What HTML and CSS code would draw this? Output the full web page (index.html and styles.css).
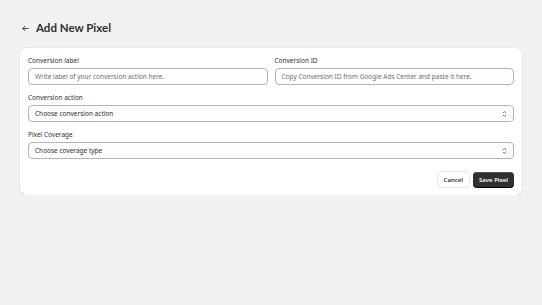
FILE: index.html
```html
<!DOCTYPE html>
<html lang="en">
<head>
	<meta charset="UTF-8">
	<title>Add New Pixel</title>
	<link rel="stylesheet" href="styles.css">
</head>
<body>
	<div class="page">
		<div class="page-header">
			<a href="javascript:;" class="back">
				<svg width="9" height="9" viewBox="0 0 20 20"><path d="M16 10H4.5M9 5l-5 5 5 5" fill="none" stroke="#303030" stroke-width="2" stroke-linecap="round" stroke-linejoin="round"/></svg>
			</a>
			<h1 class="title">Add New Pixel</h1>
		</div>
		<div class="card">
			<div class="row">
				<div class="field">
					<label class="label">Conversion label</label>
					<input type="text" class="input" placeholder="Write label of your conversion action here.">
				</div>
				<div class="field">
					<label class="label">Conversion ID</label>
					<input type="text" class="input" placeholder="Copy Conversion ID from Google Ads Center and paste it here.">
				</div>
			</div>
			<div class="field">
				<label class="label">Conversion action</label>
				<div class="select">
					<span>Choose conversion action</span>
					<svg width="9" height="10" viewBox="0 0 20 20"><path d="M7 7.5l3-3 3 3M7 12.5l3 3 3-3" fill="none" stroke="#4a4a4a" stroke-width="1.6" stroke-linecap="round" stroke-linejoin="round"/></svg>
				</div>
			</div>
			<div class="field">
				<label class="label">Pixel Coverage</label>
				<div class="select">
					<span>Choose coverage type</span>
					<svg width="9" height="10" viewBox="0 0 20 20"><path d="M7 7.5l3-3 3 3M7 12.5l3 3 3-3" fill="none" stroke="#4a4a4a" stroke-width="1.6" stroke-linecap="round" stroke-linejoin="round"/></svg>
				</div>
			</div>
			<div class="actions">
				<button class="btn">Cancel</button>
				<button class="btn btn-primary">Save Pixel</button>
			</div>
		</div>
	</div>
</body>
</html>
```
FILE: styles.css
```css
* { padding: 0; margin: 0; box-sizing: border-box; }
body { background: #f1f1f1; font-family: "Noto Sans", "Open Sans", sans-serif; color: #303030; }
.page { padding: 18px 20px 0; }
.page-header { display: flex; align-items: center; gap: 6px; height: 20px; margin-bottom: 10px; padding-left: 1px; }
.back { display: flex; align-items: center; }
.title { font-family: Lato, "Noto Sans", sans-serif; font-size: 11.5px; font-weight: 700; line-height: 20px; }
.card { background: #fff; border-radius: 7px; padding: 8px; box-shadow: 0 1px 0 rgba(0,0,0,.08), 0 0 0 1px rgba(0,0,0,.03); display: flex; flex-direction: column; gap: 8px; }
.row { display: grid; grid-template-columns: 1fr 1fr; gap: 7px; }
.field { display: flex; flex-direction: column; gap: 2px; }
.label { font-size: 6.5px; line-height: 10px; color: #303030; }
.input, .select { height: 17px; border: 1px solid #b5b5b5; border-radius: 4px; background: #fdfdfd; font-family: inherit; font-size: 6.5px; padding: 0 6px; color: #303030; }
.input::placeholder { color: #6f6f6f; }
.select { display: flex; align-items: center; justify-content: space-between; padding-right: 4px; }
.actions { display: flex; justify-content: flex-end; gap: 4px; margin-top: 5px; }
.btn { height: 15px; border-radius: 4px; border: none; font-family: inherit; font-size: 6px; font-weight: 600; padding: 0 6px; background: #fff; color: #303030; box-shadow: 0 0 0 1px #e3e3e3, 0 1px 0 #d4d4d4; }
.btn-primary { background: #303030; color: #fff; box-shadow: inset 0 1px 0 #555, 0 1px 0 #000; padding: 0 6px; }
```
